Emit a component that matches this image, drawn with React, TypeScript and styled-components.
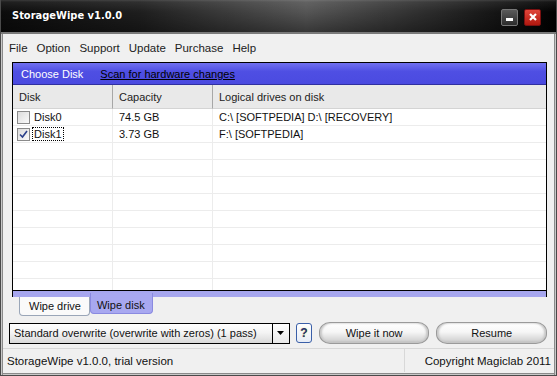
import styled, { createGlobalStyle } from 'styled-components';

const Global = createGlobalStyle`
  html, body { margin: 0; padding: 0; background: #f0f0f0; }
  body { font-family: "Liberation Sans", Arial, sans-serif; font-size: 11px; color: #000; }
`;

const Window = styled.div`
  width: 557px;
  height: 376px;
  box-sizing: border-box;
  display: flex;
  flex-direction: column;
  background: #f0f0f0;
  border: 1px solid #4a4a4a;
  border-top: none;
  box-shadow: inset 1px 0 0 #c8c8c8, inset 2px 0 0 #8a8a8a, inset -1px 0 0 #c8c8c8, inset -2px 0 0 #8a8a8a,
    inset 0 -1px 0 #c8c8c8, inset 0 -2px 0 #8a8a8a;
  overflow: hidden;
`;

const TitleBar = styled.div`
  height: 32px;
  flex: none;
  display: flex;
  align-items: center;
  padding: 0 16px 0 12px;
  margin: 0 -1px;
  background:
    linear-gradient(to bottom, rgba(255, 255, 255, 0.18) 0px, rgba(255, 255, 255, 0.08) 2px, rgba(0, 0, 0, 0) 12px, rgba(0, 0, 0, 0.35) 100%),
    linear-gradient(to right, #0c0c0c 0%, #1e1e1e 25%, #555 55%, #2a2a2a 78%, #000 100%);
  border-bottom: 2px solid #7a7a7a;
  color: #fff;
`;

const Title = styled.div`
  flex: 1;
  font-family: "DejaVu Sans Condensed", "DejaVu Sans", sans-serif;
  font-weight: bold;
  font-size: 11px;
  margin-top: -2px;
  text-shadow: 0 0 1px #000;
`;

const CaptionButton = styled.div<{ $close?: boolean }>`
  width: 15px;
  height: 15px;
  margin-left: 6px;
  margin-top: 2px;
  border-radius: 2px;
  border: 1px solid ${(p) => (p.$close ? '#7a1010' : '#777')};
  background: ${(p) => (p.$close ? 'linear-gradient(#e0453a, #b0180f)' : 'linear-gradient(#5a5a5a, #2c2c2c)')};
  display: flex;
  align-items: center;
  justify-content: center;
`;

const MenuBar = styled.div`
  height: 28px;
  flex: none;
  display: flex;
  align-items: center;
  padding: 0 0 0 8px;
  gap: 9px;
  font-size: 11.5px;
  color: #222;
`;

const Content = styled.div`
  flex: 1;
  display: flex;
  flex-direction: column;
  padding: 0 9px 0 11px;
`;

const Panel = styled.div`
  height: 229px;
  border: 1px solid #000;
  background: #fff;
  display: flex;
  flex-direction: column;
  box-sizing: border-box;
`;

const PanelHeader = styled.div`
  height: 21px;
  flex: none;
  display: flex;
  align-items: center;
  gap: 17px;
  padding-left: 8px;
  background: linear-gradient(#7070f0, #4f4fe3 40%, #4a4ae0);
  border-bottom: 1px solid #3030a0;
  color: #fff;
`;

const ScanLink = styled.span`
  color: #000;
  text-decoration: underline;
`;

const Grid = styled.div`
  display: grid;
  grid-template-columns: 100px 100px 1fr;
  grid-template-rows: 24px;
  grid-auto-rows: 17px;
  flex: 1;
  overflow: hidden;
`;

const HeadCell = styled.div<{ $last?: boolean }>`
  display: flex;
  align-items: center;
  padding-left: 6px;
  background: #e9e9e9;
  border-right: ${(p) => (p.$last ? 'none' : '1px solid #a7a7a7')};
  border-bottom: 1px solid #d4d4d4;
  box-sizing: border-box;
  color: #222;
`;

const Row = styled.div`
  display: contents;
`;

const Cell = styled.div<{ $last?: boolean; $first?: boolean }>`
  box-sizing: border-box;
  display: flex;
  align-items: center;
  padding-left: ${(p) => (p.$first ? '4px' : '6px')};
  gap: 4px;
  border-right: ${(p) => (p.$last ? 'none' : '1px solid #ececec')};
  border-bottom: 1px solid #ececec;
  white-space: nowrap;
  color: #111;
`;

const Check = styled.span`
  width: 11px;
  height: 11px;
  border: 1px solid #8a8a8a;
  background: linear-gradient(135deg, #dcdcdc, #fafafa);
  display: inline-flex;
  align-items: center;
  justify-content: center;
  flex: none;
`;

const Focused = styled.span`
  outline: 1px dotted #000;
  padding: 0 1px;
  margin-left: -1px;
`;

const TabStrip = styled.div`
  height: 6px;
  background: #a6a6ee;
  border-left: 1px solid #000;
  border-right: 1px solid #000;
`;

const Tabs = styled.div`
  display: flex;
  padding-left: 7px;
  height: 21px;
`;

const Tab = styled.div<{ $active?: boolean }>`
  height: ${(p) => (p.$active ? '16px' : '18px')};
  margin-top: ${(p) => (p.$active ? '-4px' : '0')};
  padding: ${(p) => (p.$active ? '4px 7px 0 6px' : '0 8px 0 9px')};
  display: flex;
  align-items: center;
  background: ${(p) => (p.$active ? '#a8a8f0' : '#fafafa')};
  border: 1px solid ${(p) => (p.$active ? '#8a8ae0' : '#9aa6b8')};
  border-top: none;
  border-radius: 0 0 4px 4px;
  color: #111;
`;

const Controls = styled.div`
  display: flex;
  align-items: center;
  height: 22px;
  margin: 4px 0 0 -3px;
`;

const Combo = styled.div`
  width: 282px;
  height: 21px;
  border: 1px solid #000;
  display: flex;
  align-items: center;
  box-sizing: border-box;
  background: linear-gradient(#fefefe, #f4f4f4 45%, #d8d8d8);
`;

const ComboText = styled.div`
  flex: 1;
  padding-left: 4px;
  white-space: nowrap;
  color: #111;
`;

const ComboArrow = styled.div`
  width: 16px;
  height: 19px;
  border-left: 1px solid #000;
  display: flex;
  align-items: center;
  justify-content: center;
  background: linear-gradient(#fefefe, #e8e8e8);
`;

const HelpButton = styled.div`
  width: 14px;
  height: 18px;
  margin-left: 6px;
  border: 1px solid #3a5fa8;
  border-radius: 3px;
  background: linear-gradient(#fff, #e6ecf6);
  display: flex;
  align-items: center;
  justify-content: center;
  font-weight: bold;
  font-size: 12px;
  color: #1a2f80;
  text-shadow: 0 0 1px #e8c800;
`;

const PillButton = styled.div`
  width: 111px;
  height: 22px;
  margin-left: 7px;
  box-sizing: border-box;
  border-radius: 11px / 10px;
  border: 1px solid #9a9a9a;
  background: linear-gradient(#ffffff, #f6f6f6 45%, #d6d6d6 85%, #bcbcbc);
  box-shadow: inset 2px 0 2px #c8c8c8, inset -2px 0 2px #c8c8c8;
  display: flex;
  align-items: center;
  justify-content: center;
  color: #111;
`;

const StatusBar = styled.div`
  height: 23px;
  flex: none;
  margin: 4px 2px 3px 2px;
  border-top: 1px solid #d8d8d8;
  display: flex;
  align-items: center;
  font-size: 11.5px;
`;

const StatusCell = styled.div<{ $right?: boolean }>`
  height: 100%;
  display: flex;
  align-items: center;
  flex: ${(p) => (p.$right ? 'none' : '1')};
  border-left: ${(p) => (p.$right ? '1px solid #d8d8d8' : 'none')};
  padding: ${(p) => (p.$right ? '0 3px 0 20px' : '0 4px')};
  color: #111;
`;

const disks = [
  { name: 'Disk0', capacity: '74.5 GB', drives: 'C:\\ [SOFTPEDIA] D:\\ [RECOVERY]', checked: false },
  { name: 'Disk1', capacity: '3.73 GB', drives: 'F:\\ [SOFTPEDIA]', checked: true },
];

export default function App() {
  const emptyRows = Array.from({ length: 9 });
  return (
    <>
      <Global />
      <Window>
        <TitleBar>
          <Title>StorageWipe v1.0.0</Title>
          <CaptionButton>
            <svg width="9" height="9" viewBox="0 0 9 9">
              <rect x="1" y="5" width="7" height="3" fill="#fff" />
            </svg>
          </CaptionButton>
          <CaptionButton $close>
            <svg width="10" height="10" viewBox="0 0 10 10">
              <path d="M2 2 L8 8 M8 2 L2 8" stroke="#fff" strokeWidth="2.2" />
            </svg>
          </CaptionButton>
        </TitleBar>
        <MenuBar>
          <span>File</span>
          <span>Option</span>
          <span>Support</span>
          <span>Update</span>
          <span>Purchase</span>
          <span>Help</span>
        </MenuBar>
        <Content>
          <Panel>
            <PanelHeader>
              <span>Choose Disk</span>
              <ScanLink>Scan for hardware changes</ScanLink>
            </PanelHeader>
            <Grid>
              <HeadCell>Disk</HeadCell>
              <HeadCell>Capacity</HeadCell>
              <HeadCell $last>Logical drives on disk</HeadCell>
              {disks.map((d) => (
                <Row key={d.name}>
                  <Cell $first>
                    <Check>
                      {d.checked && (
                        <svg width="9" height="9" viewBox="0 0 9 9">
                          <path d="M1 4.5 L3.5 7 L8 1" stroke="#2a3f8a" strokeWidth="1.6" fill="none" />
                        </svg>
                      )}
                    </Check>
                    {d.checked ? <Focused>{d.name}</Focused> : <span>{d.name}</span>}
                  </Cell>
                  <Cell>{d.capacity}</Cell>
                  <Cell $last>{d.drives}</Cell>
                </Row>
              ))}
              {emptyRows.map((_, i) => (
                <Row key={i}>
                  <Cell />
                  <Cell />
                  <Cell $last />
                </Row>
              ))}
            </Grid>
          </Panel>
          <TabStrip />
          <Tabs>
            <Tab>Wipe drive</Tab>
            <Tab $active>Wipe disk</Tab>
          </Tabs>
          <Controls>
            <Combo>
              <ComboText>Standard overwrite (overwrite with zeros) (1 pass)</ComboText>
              <ComboArrow>
                <svg width="7" height="4" viewBox="0 0 7 4">
                  <path d="M0 0 H7 L3.5 4 Z" fill="#000" />
                </svg>
              </ComboArrow>
            </Combo>
            <HelpButton>?</HelpButton>
            <PillButton>Wipe it now</PillButton>
            <PillButton>Resume</PillButton>
          </Controls>
        </Content>
        <StatusBar>
          <StatusCell>StorageWipe v1.0.0, trial version</StatusCell>
          <StatusCell $right>Copyright Magiclab 2011</StatusCell>
        </StatusBar>
      </Window>
    </>
  );
}
